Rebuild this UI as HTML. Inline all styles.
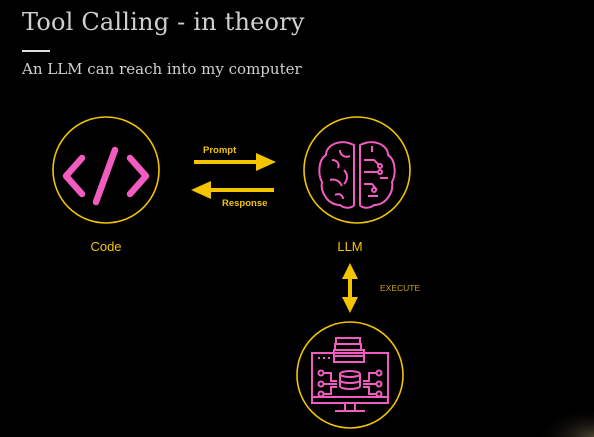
<!DOCTYPE html>
<html style="overflow:hidden"><head><style>
html,body{overflow:hidden;margin:0;padding:0}
body{width:594px;height:437px;background:#000;position:relative;font-family:"Liberation Sans",sans-serif}
.t{position:absolute;left:22px;top:8px;font-family:"DejaVu Serif","Liberation Serif",serif;font-size:24px;color:#d0d0d0;letter-spacing:0.2px;white-space:nowrap}
.bar{position:absolute;left:22px;top:50px;width:28px;height:2px;background:#ddd}
.s{position:absolute;left:22px;top:60px;font-family:"DejaVu Serif","Liberation Serif",serif;font-size:15px;color:#d0d0d0;white-space:nowrap}
</style></head><body>
<div class="t">Tool Calling - in theory</div>
<div class="bar"></div>
<div class="s">An LLM can reach into my computer</div>
<svg width="594" height="437" style="position:absolute;left:0;top:0;display:block;overflow:hidden">
<defs><radialGradient id="g" cx="1" cy="1" r="1"><stop offset="0" stop-color="#4a4232"/><stop offset="1" stop-color="#000" stop-opacity="0"/></radialGradient></defs>
<path d="M534,437 Q560,410 594,407 L594,437 Z" fill="url(#g)"/>
<g fill="none" stroke="#f5c400" stroke-width="1.6">
<circle cx="106" cy="170" r="53"/><circle cx="357" cy="170" r="53"/><circle cx="350" cy="375" r="53"/>
</g>
<g fill="none" stroke="#f25cc0" stroke-width="6.5" stroke-linecap="round" stroke-linejoin="round">
<polyline points="82,158 66,176 82,194"/><polyline points="130,158 146,176 130,194"/><line x1="115" y1="150" x2="96" y2="202"/>
</g>
<g fill="none" stroke="#f25cc0" stroke-width="2">
<path d="M354,145 C340,138 326,145 326,155 C318,160 318,175 322,182 C320,192 328,205 340,205 C346,210 354,207 354,205 Z"/>
<path d="M360,145 C374,138 388,145 388,155 C396,160 396,175 392,182 C394,192 386,205 374,205 C368,210 360,207 360,205 Z"/>
<path d="M332,160 c5,0 8,4 6,8 M340,150 c0,6 6,8 10,6 M330,180 c6,-2 10,2 12,6 M344,170 c4,4 4,10 0,14 M335,195 c4,-2 8,0 8,4"/>
<path d="M364,160 h10 l5,5 M364,172 h14 M364,184 h8 l5,6 M372,152 v-6 M380,178 h8 M368,196 h10"/>
<circle cx="380" cy="166" r="2"/><circle cx="380" cy="172" r="2"/><circle cx="374" cy="190" r="2"/>
</g>
<g fill="none" stroke="#f25cc0" stroke-width="2">
<rect x="312" y="353" width="76" height="50"/>
<line x1="312" y1="397" x2="388" y2="397"/>
<path d="M345,403 v8 h-10 h30 h-10 v-8"/>
<rect x="336" y="338" width="24" height="6"/><rect x="335" y="344" width="26" height="6"/><rect x="334" y="350" width="30" height="6"/><rect x="334" y="356" width="30" height="6" fill="#000"/>
<ellipse cx="350" cy="374" rx="10" ry="3"/><path d="M340,374 v12 c0,4 20,4 20,0 v-12 M340,380 c0,4 20,4 20,0"/>
<path d="M323,373 h8 v8 h6 M323,384 h14 M323,394 h8 v-7 h6 M377,373 h-8 v8 h-6 M377,384 h-14 M377,394 h-8 v-7 h-6"/>
<circle cx="321" cy="373" r="2.5"/><circle cx="321" cy="384" r="2.5"/><circle cx="321" cy="394" r="2.5"/>
<circle cx="379" cy="373" r="2.5"/><circle cx="379" cy="384" r="2.5"/><circle cx="379" cy="394" r="2.5"/>
<path d="M318,358 h2 M323,358 h2 M328,358 h2"/>
</g>
<g fill="#f5c400">
<rect x="194" y="160" width="66" height="4"/><polygon points="256,153 276,162 256,171"/>
<rect x="208" y="188" width="66" height="4"/><polygon points="211,181 191,190 211,199"/>
<rect x="348" y="275" width="4" height="28"/><polygon points="342,279 350,263 358,279"/><polygon points="342,297 350,313 358,297"/>
<text x="203" y="153" font-size="9.5" font-weight="bold" font-family="Liberation Sans,sans-serif">Prompt</text>
<text x="222" y="206" font-size="9.5" font-weight="bold" font-family="Liberation Sans,sans-serif">Response</text>
<text x="380" y="291" font-size="8.5" fill="#c9a100" font-family="Liberation Sans,sans-serif">EXECUTE</text>
<text x="106" y="251" font-size="13" text-anchor="middle" font-family="Liberation Sans,sans-serif">Code</text>
<text x="350" y="251" font-size="13" text-anchor="middle" font-family="Liberation Sans,sans-serif">LLM</text>
</g>
</svg>
</body></html>
